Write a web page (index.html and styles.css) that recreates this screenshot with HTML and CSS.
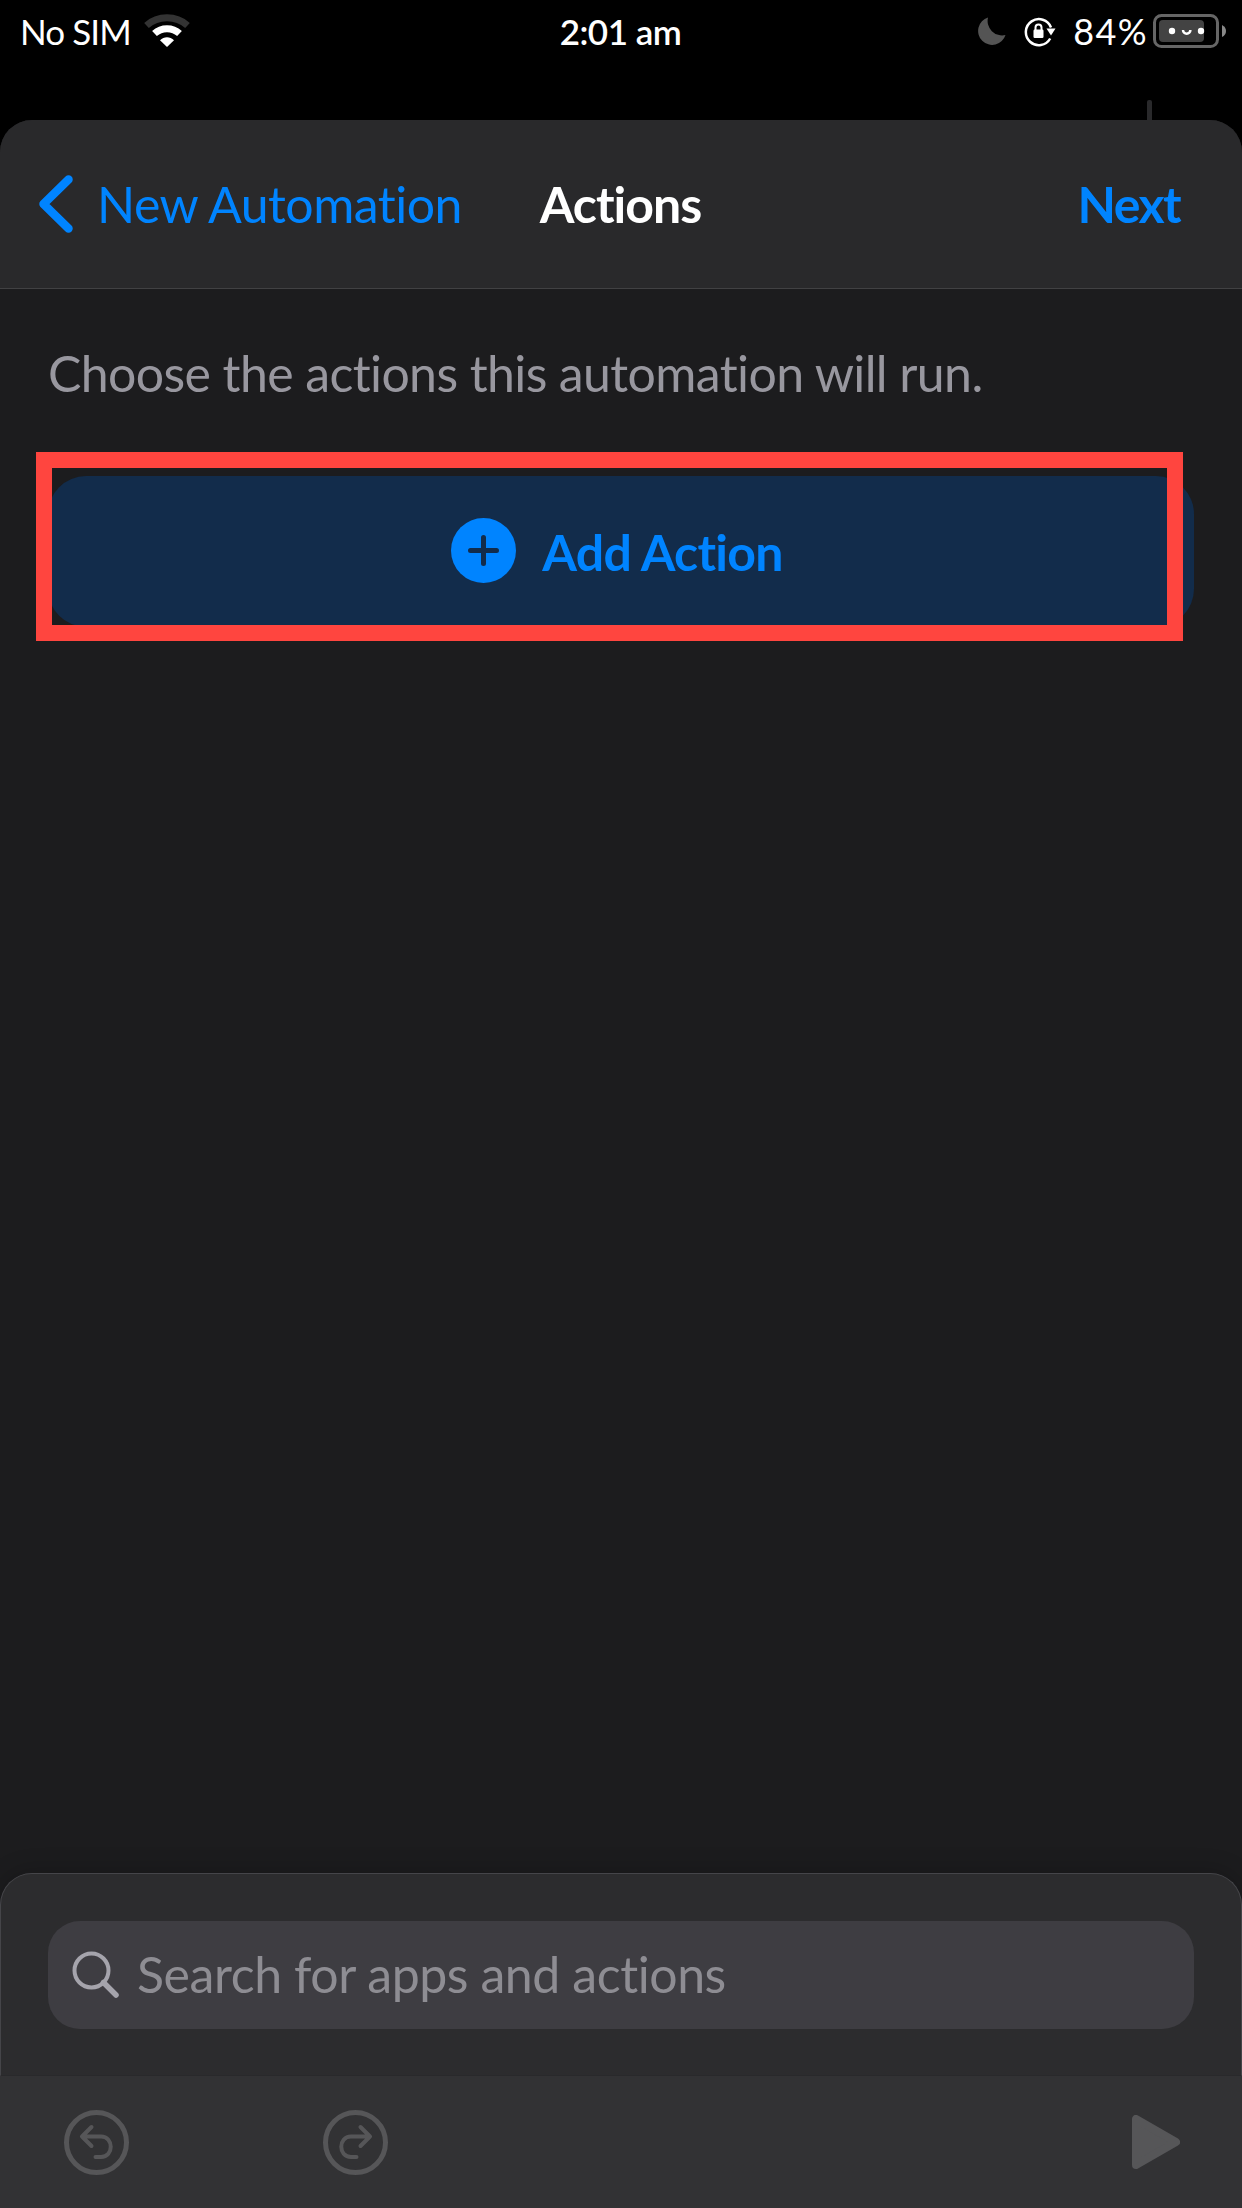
FILE: index.html
```
<!DOCTYPE html>
<html lang="en">
<head>
<meta charset="utf-8">
<title>Actions</title>
<link rel="stylesheet" href="styles.css">
</head>
<body>
<div class="screen">
  <header class="status">
    <div class="status-left">
      <span class="carrier">No SIM</span>
      <svg class="wifi" width="46" height="34" viewBox="0 0 46 34">
        <path d="M2.500 11.500C14 1.300 32 1.300 43.500 11.500" fill="none" stroke="#333" stroke-width="7"/>
        <path d="M10.500 19.500C17.500 13 28.500 13 35.500 19.500" fill="none" stroke="#fff" stroke-width="7"/>
        <path d="M16 26.300C20 22.200 26 22.200 30 26.300L23 33Z" fill="#fff"/>
      </svg>
    </div>
    <span class="time">2:01 am</span>
    <div class="status-right">
      <svg class="moon" width="28" height="28" viewBox="0 0 28 28"><path d="M10 0.500A14 14 0 1 0 27.500 18A14.500 14.500 0 0 1 10 0.500Z" fill="#545454"/></svg>
      <svg class="lock" width="32" height="30" viewBox="0 0 32 30">
        <path d="M26.200 21.500A13 13 0 1 1 27 10.500" fill="none" stroke="#fff" stroke-width="2.500"/>
        <path d="M22.500 11.500H31.500L27 18.500Z" fill="#fff"/>
        <rect x="9.500" y="12.500" width="10" height="8.500" rx="1.200" fill="#fff"/>
        <path d="M11.500 13V10.500a3 3 0 0 1 6 0V13" fill="none" stroke="#fff" stroke-width="2"/>
      </svg>
      <span class="percent">84%</span>
      <svg class="battery" width="74" height="34" viewBox="0 0 74 34">
        <rect x="1.500" y="1.500" width="63" height="31" rx="7" fill="none" stroke="#666" stroke-width="3"/>
        <rect x="6" y="6" width="45" height="22" rx="4" fill="#434343"/>
        <circle cx="19" cy="17" r="3.200" fill="#fff"/><circle cx="48" cy="17" r="3.200" fill="#fff"/>
        <path d="M30 16a3.700 3.700 0 0 0 7.400 0" fill="none" stroke="#fff" stroke-width="2.500"/>
        <path d="M69 11Q73 13 73 17T69 23Z" fill="#888"/>
      </svg>
    </div>
  </header>
  <div class="behind"></div>
  <main class="sheet">
    <nav class="nav">
      <a class="back">
        <svg width="34" height="58" viewBox="0 0 34 58"><path d="M29.500 4.500L4.500 29L29.500 53.500" fill="none" stroke="#0084ff" stroke-width="8.500" stroke-linecap="round" stroke-linejoin="round"/></svg>
        <span class="back-label">New Automation</span>
      </a>
      <h1 class="title">Actions</h1>
      <a class="next">Next</a>
    </nav>
    <section class="content">
      <p class="hint">Choose the actions this automation will run.</p>
      <div class="action-slot">
        <button class="add">
          <svg width="65" height="65" viewBox="0 0 65 65"><circle cx="32.500" cy="32.500" r="32.500" fill="#0084ff"/><path d="M32.500 19.500V45.500M19.500 32.500H45.500" stroke="#122c4b" stroke-width="5" stroke-linecap="round"/></svg>
          <span class="add-label">Add Action</span>
        </button>
        <div class="highlight"></div>
      </div>
    </section>
    <section class="search">
      <div class="field">
        <svg width="48" height="48" viewBox="0 0 48 48"><circle cx="19.500" cy="19.500" r="17" fill="none" stroke="#a5a4ac" stroke-width="4"/><path d="M31.500 31.500L44 44" stroke="#a5a4ac" stroke-width="5.500" stroke-linecap="round"/></svg>
        <span class="placeholder">Search for apps and actions</span>
      </div>
    </section>
    <footer class="toolbar">
      <svg class="undo" width="65" height="65" viewBox="0 0 65 65" fill="none" stroke="#565658" stroke-linecap="round" stroke-linejoin="round"><circle cx="32.500" cy="32.500" r="30" stroke-width="5"/><path d="M27.500 17L18 26.500L27.500 36M18 26.500H37C50 26.500 50 47 37 47H31.500" stroke-width="4"/></svg>
      <svg class="redo" width="65" height="65" viewBox="0 0 65 65" fill="none" stroke="#565658" stroke-linecap="round" stroke-linejoin="round"><circle cx="32.500" cy="32.500" r="30" stroke-width="5"/><path d="M37.500 17L47 26.500L37.500 36M47 26.500H28C15 26.500 15 47 28 47H33.500" stroke-width="4"/></svg>
      <svg class="play" width="48" height="54" viewBox="0 0 48 54"><path d="M4 4V50L44 27Z" fill="#565658" stroke="#565658" stroke-width="8" stroke-linejoin="round"/></svg>
    </footer>
  </main>
</div>
</body>
</html>
```
FILE: styles.css
```
* { box-sizing: border-box; }

body {
  margin: 0;
  background: #000;
  font-family: Lato, "Liberation Sans", sans-serif;
  font-size: 50px;
  line-height: 60px;
  white-space: nowrap;
}

svg { display: block; flex: none; }

.screen {
  height: 2208px;
  display: flex;
  flex-direction: column;
  overflow: hidden;
}

/* Status bar */
.status {
  height: 61px;
  flex: none;
  display: grid;
  grid-template-columns: 1fr auto 1fr;
  align-items: center;
  padding: 0 15px 0 20px;
  color: #fff;
  font-size: 35px;
}

.status-left,
.status-right {
  display: flex;
  align-items: center;
}

.status-right { justify-content: flex-end; }
.carrier { letter-spacing: -0.9px; }
.wifi { margin-left: 13px; }
.time { padding-right: 6px; font-weight: 600; letter-spacing: -0.5px; }
.moon { margin-right: 18px; }
.lock { margin: 2px 17px 0 0; }
.percent { font-size: 36px; letter-spacing: 1.4px; }
.battery { margin-left: 5px; }

/* Edge of the view that the sheet covers */
.behind {
  width: 5px;
  height: 20px;
  flex: none;
  margin: 39px 90px 0 auto;
  border-radius: 2px 2px 0 0;
  background: #29292b;
}

/* Sheet */
.sheet {
  flex: 1;
  display: flex;
  flex-direction: column;
  background: #1c1c1e;
  border-radius: 32px 32px 0 0;
  overflow: hidden;
}

.nav {
  height: 169px;
  flex: none;
  display: grid;
  grid-template-columns: 1fr auto 1fr;
  align-items: center;
  padding: 0 62px 0 39px;
  background: #29292b;
  border-bottom: 1px solid #414143;
  color: #0084ff;
}

.back {
  display: flex;
  align-items: center;
  gap: 24px;
}

.back-label { letter-spacing: -0.5px; }

.title {
  margin: 0;
  padding-left: 22px;
  font-size: 50px;
  font-weight: 700;
  letter-spacing: -1px;
  color: #fff;
}

.next {
  justify-self: end;
  font-weight: 700;
  letter-spacing: -1.6px;
}

.content {
  flex: 1;
  padding: 54px 48px 0;
}

.hint {
  margin: 0 0 73px;
  color: #98979f;
  letter-spacing: -0.61px;
}

.action-slot { position: relative; }

.add {
  width: 100%;
  height: 151px;
  display: flex;
  align-items: center;
  justify-content: center;
  gap: 26px;
  padding: 0 8px 2px 0;
  border: 0;
  border-radius: 38px;
  background: #122c4b;
  color: #0084ff;
  font: inherit;
  font-weight: 700;
}

.add-label { letter-spacing: -0.75px; margin-top: 3px; }

.highlight {
  position: absolute;
  inset: -24px 11px -14px -12px;
  border: 16px solid #ff453f;
}

/* Search drawer */
.search {
  height: 203px;
  flex: none;
  padding: 47px 47px 0;
  background: #2c2c2e;
  border: 1px solid #454549;
  border-bottom-color: #29292b;
  border-radius: 32px 32px 0 0;
  box-shadow: 0 -2px 24px rgba(0, 0, 0, 0.2);
}

.field {
  height: 108px;
  display: flex;
  align-items: center;
  gap: 17px;
  padding-left: 24px;
  border-radius: 32px;
  background: #3e3d42;
  color: #8e8d93;
}

.placeholder { letter-spacing: -0.43px; margin-bottom: 2px; }

/* Bottom toolbar */
.toolbar {
  height: 132px;
  flex: none;
  display: flex;
  align-items: center;
  padding: 0 62px 0 64px;
  background: #323234;
}

.redo { margin-left: 194px; }
.play { margin-left: auto; }
```
